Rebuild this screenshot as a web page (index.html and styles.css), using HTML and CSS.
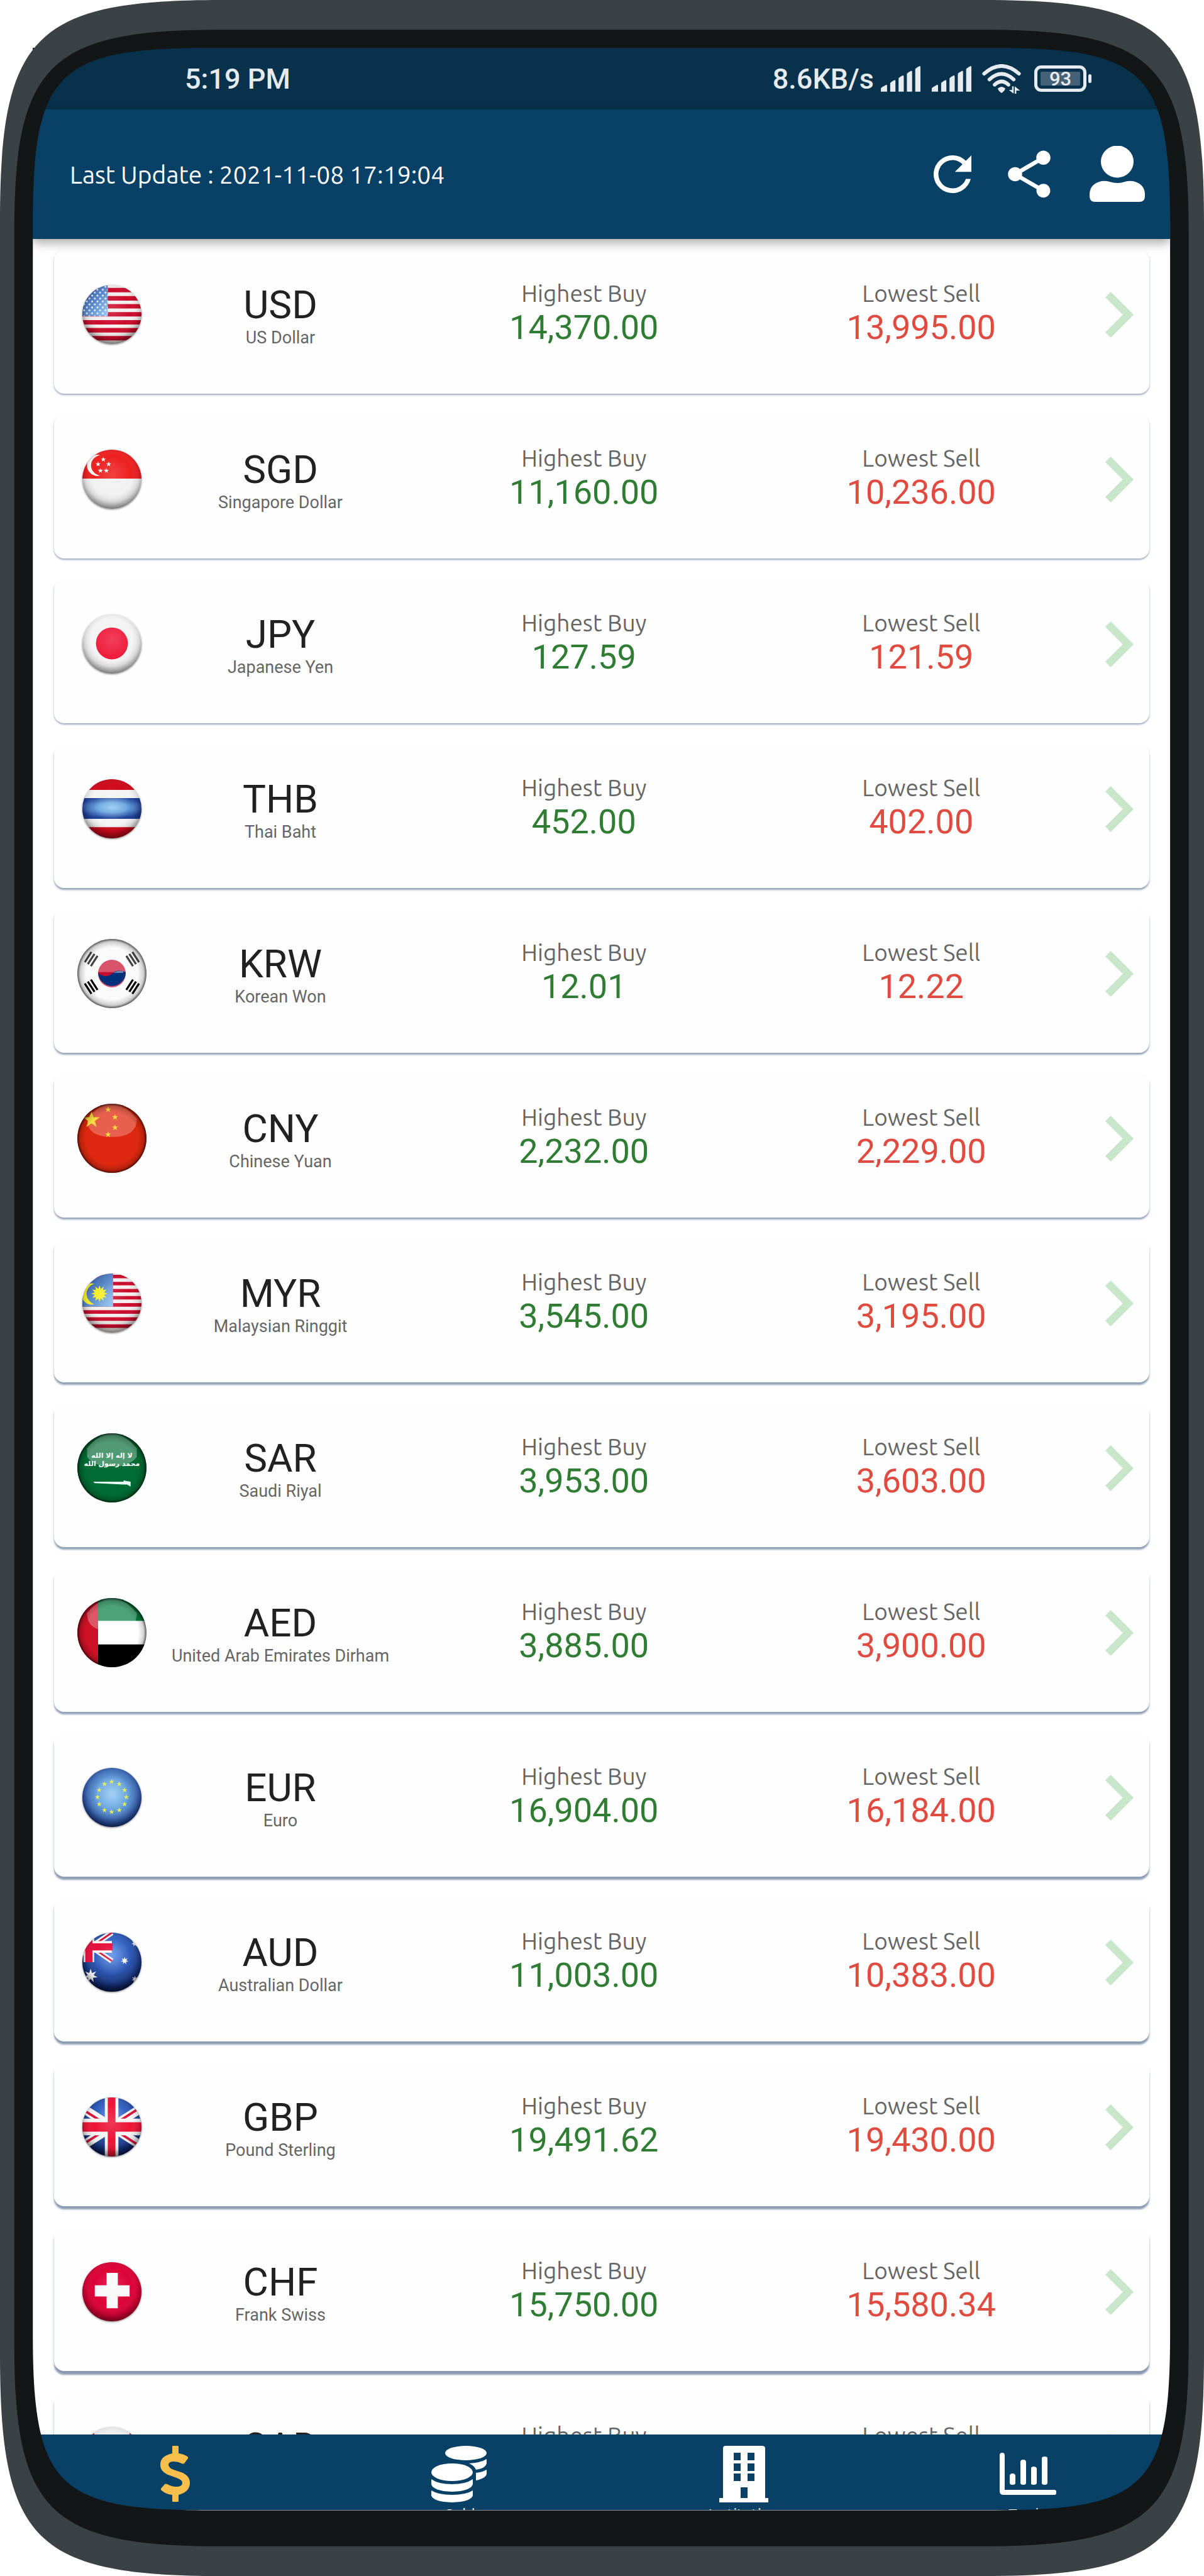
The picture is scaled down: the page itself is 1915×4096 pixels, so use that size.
FILE: index.html
```html
<!DOCTYPE html>
<html lang="en">
<head>
<meta charset="utf-8">
<meta name="viewport" content="width=device-width, initial-scale=1">
<title>Exchange rates</title>
<link rel="stylesheet" href="styles.css">
</head>
<body>
<svg class="defs" aria-hidden="true">
  <defs>
    <radialGradient id="shade" cx="50%" cy="42%" r="58%">
      <stop offset="0" stop-color="#fff" stop-opacity=".16"/>
      <stop offset=".55" stop-color="#fff" stop-opacity="0"/>
      <stop offset=".8" stop-color="#000" stop-opacity=".12"/>
      <stop offset="1" stop-color="#000" stop-opacity=".5"/>
    </radialGradient>
    <radialGradient id="rim" cx="50%" cy="50%" r="50%">
      <stop offset=".76" stop-color="#000" stop-opacity="0"/>
      <stop offset=".92" stop-color="#000" stop-opacity=".18"/>
      <stop offset="1" stop-color="#000" stop-opacity=".65"/>
    </radialGradient>
    <radialGradient id="skyglow" cx="50%" cy="45%" r="55%">
      <stop offset="0" stop-color="#92c8f2"/>
      <stop offset=".45" stop-color="#6ba6e0"/>
      <stop offset="1" stop-color="#1c3d94"/>
    </radialGradient>
    <radialGradient id="navyglow" cx="50%" cy="35%" r="62%">
      <stop offset="0" stop-color="#5b90ea"/>
      <stop offset=".5" stop-color="#2f5bb8"/>
      <stop offset="1" stop-color="#0b1f5e"/>
    </radialGradient>
    <linearGradient id="canton" x1="0" y1="0" x2="1" y2="1">
      <stop offset="0" stop-color="#1f459c"/>
      <stop offset="1" stop-color="#8fc6f0"/>
    </linearGradient>
    <pattern id="stars" width="9" height="10" patternUnits="userSpaceOnUse">
      <circle cx="3" cy="3" r="1.5" fill="#fff"/><circle cx="7.500" cy="8" r="1.500" fill="#fff"/>
    </pattern>
    <symbol id="star" viewBox="-10 -10 20 20">
      <path d="M0-10 2.400-3.200 9.500-3.100 3.900 1.200 5.900 8.100 0 4-5.900 8.100-3.900 1.200-9.500-3.100-2.400-3.200Z"/>
    </symbol>
    <symbol id="star7" viewBox="-10 -10 20 20">
      <path d="M0-10 1.900-3.900 7.800-6.200 4.200-1 9.700 2.200 3.400 2.700 4.300 9 0 4.300-4.300 9-3.400 2.700-9.700 2.200-4.200-1-7.800-6.200-1.900-3.900Z"/>
    </symbol>
    <symbol id="trigram" viewBox="0 0 24 18">
      <path d="M0 0h24v4H0zM0 7h24v4H0zM0 14h24v4H0z"/>
    </symbol>
    <symbol id="chevron" viewBox="8.590 6 7.410 12">
      <path d="M10 6 8.590 7.410 13.170 12l-4.580 4.590L10 18l6-6z"/>
    </symbol>
    <symbol id="signal" viewBox="0 0 76 49">
      <path d="M0 49V43Q0 41 10 36Q12 35 12 38V49ZM18 49V33Q18 31 26 27Q28 26 28 29V49ZM34 49V24Q34 22 42 18Q44 17 44 20V49ZM50 49V15Q50 13 58 9Q60 8 60 11V49ZM66 49V6Q66 4 74 0Q76-1 76 2V49Z"/>
    </symbol>
  </defs>
</svg>

<div class="phone">
  <div class="screen">
    <div class="statusbar">
      <span class="clock">5:19 PM</span>
      <div class="status-icons">
        <span class="speed">8.6KB/s</span>
        <svg class="signal" aria-hidden="true"><use href="#signal"/></svg>
        <svg class="signal" aria-hidden="true"><use href="#signal"/></svg>
        <svg class="wifi" viewBox="0 0 74 56" aria-hidden="true">
          <g fill="none" stroke="currentColor" stroke-width="7" stroke-linecap="round"><path d="M4 18Q37-11 70 18M14 29Q37 8 60 29M24 39Q37 27 50 39"/></g>
          <path fill="currentColor" d="M30 46Q37 40 44 46Q44 50 37 55Q30 50 30 46ZM57 42h3v14L51 49h6ZM65 57h-3V42l10 8h-7Z"/>
        </svg>
        <span class="battery"><span class="battery-level">93</span></span>
      </div>
    </div>

    <header class="appbar">
      <p class="updated">Last Update : 2021-11-08 17:19:04</p>
      <button class="icon-button" type="button" aria-label="Refresh">
        <svg viewBox="0 0 24 24"><path d="M17.650 6.350A7.958 7.958 0 0 0 12 4a8 8 0 1 0 7.730 10h-2.080A5.990 5.990 0 0 1 12 18a6 6 0 1 1 0-12c1.660 0 3.140.690 4.220 1.780L13 11h7V4z"/></svg>
      </button>
      <button class="icon-button" type="button" aria-label="Share">
        <svg viewBox="0 0 24 24"><path d="M18 16.080c-.76 0-1.440.3-1.960.77L8.910 12.700c.05-.23.09-.46.09-.7s-.04-.47-.09-.7l7.050-4.110c.54.5 1.250.81 2.040.81 1.660 0 3-1.340 3-3s-1.340-3-3-3-3 1.340-3 3c0 .24.04.47.09.7L8.040 9.810C7.500 9.310 6.790 9 6 9c-1.660 0-3 1.340-3 3s1.340 3 3 3c.79 0 1.500-.31 2.040-.81l7.120 4.160c-.05.21-.08.43-.08.65 0 1.610 1.310 2.920 2.920 2.920s2.920-1.310 2.920-2.920-1.310-2.920-2.920-2.920z"/></svg>
      </button>
      <button class="icon-button account" type="button" aria-label="Account">
        <svg viewBox="0 0 90 90"><ellipse cx="45" cy="25" rx="26" ry="25.500"/><path d="M1 80V76Q2 60 20 56Q27 55 33 57Q45 61 57 57Q63 55 70 56Q88 60 89 76V80Q89 89 80 89H10Q1 89 1 80Z"/></svg>
      </button>
    </header>

    <main class="list">
      <ul class="rates">
        <li><a class="card" href="#usd">
          <svg class="flag" viewBox="0 0 100 100" aria-hidden="true"><path fill="#f4eeee" d="M0 0h100v100H0z"/><path fill="#cb0b2c" d="M0 5h100v7.500H0zM0 19h100v7.500H0zM0 32.500h100v7.500H0zM0 46h100v7.500H0zM0 59.500h100v7.500H0zM0 73h100v7.500H0zM0 86.500h100v7.500H0z"/><path fill="url(#canton)" d="M0 0h43v53H0z"/><path fill="url(#stars)" d="M0 0h43v53H0z"/><path fill="url(#shade)" d="M0 0h100v100H0z"/></svg>
          <div class="currency"><h2 class="code">USD</h2><p class="name">US Dollar</p></div>
          <dl class="quote buy"><dt>Highest Buy</dt><dd>14,370.00</dd></dl>
          <dl class="quote sell"><dt>Lowest Sell</dt><dd>13,995.00</dd></dl>
          <svg class="chevron" aria-hidden="true"><use href="#chevron"/></svg>
        </a></li>
        <li><a class="card" href="#sgd">
          <svg class="flag" viewBox="0 0 100 100" aria-hidden="true"><path fill="#f2f2f2" d="M0 0h100v100H0z"/><path fill="#ee2020" d="M0 0h100v49H0z"/><path fill="#fff" d="M30 9A18 18 0 1 0 30 44A20 18 0 0 1 30 9Z"/><g fill="#fff"><use href="#star" x="31" y="12" width="9" height="9"/><use href="#star" x="22" y="20" width="9" height="9"/><use href="#star" x="40" y="20" width="9" height="9"/><use href="#star" x="26" y="31" width="9" height="9"/><use href="#star" x="36" y="31" width="9" height="9"/></g><path fill="url(#shade)" d="M0 0h100v100H0z"/></svg>
          <div class="currency"><h2 class="code">SGD</h2><p class="name">Singapore Dollar</p></div>
          <dl class="quote buy"><dt>Highest Buy</dt><dd>11,160.00</dd></dl>
          <dl class="quote sell"><dt>Lowest Sell</dt><dd>10,236.00</dd></dl>
          <svg class="chevron" aria-hidden="true"><use href="#chevron"/></svg>
        </a></li>
        <li><a class="card" href="#jpy">
          <svg class="flag" viewBox="0 0 100 100" aria-hidden="true"><path fill="#f4f4f4" d="M0 0h100v100H0z"/><circle cx="50" cy="49" r="27" fill="#ef1c3c"/><path fill="url(#shade)" d="M0 0h100v100H0z"/></svg>
          <div class="currency"><h2 class="code">JPY</h2><p class="name">Japanese Yen</p></div>
          <dl class="quote buy"><dt>Highest Buy</dt><dd>127.59</dd></dl>
          <dl class="quote sell"><dt>Lowest Sell</dt><dd>121.59</dd></dl>
          <svg class="chevron" aria-hidden="true"><use href="#chevron"/></svg>
        </a></li>
        <li><a class="card" href="#thb">
          <svg class="flag" viewBox="0 0 100 100" aria-hidden="true"><path fill="#f4f4f4" d="M0 0h100v100H0z"/><path fill="#cf0a1c" d="M0 0h100v18H0zM0 81h100v19H0z"/><path fill="url(#skyglow)" d="M0 32h100v35H0z"/><path fill="url(#shade)" d="M0 0h100v100H0z"/></svg>
          <div class="currency"><h2 class="code">THB</h2><p class="name">Thai Baht</p></div>
          <dl class="quote buy"><dt>Highest Buy</dt><dd>452.00</dd></dl>
          <dl class="quote sell"><dt>Lowest Sell</dt><dd>402.00</dd></dl>
          <svg class="chevron" aria-hidden="true"><use href="#chevron"/></svg>
        </a></li>
        <li><a class="card" href="#krw">
          <svg class="flag large" viewBox="0 0 100 100" aria-hidden="true"><path fill="#fafafa" d="M0 0h100v100H0z"/><circle cx="50" cy="50" r="20" fill="#d9546b"/><path fill="#00307a" d="M30 48A20 20 0 0 0 70 48Q58 43 50 50Q40 58 30 48Z"/><path fill="#c40b30" d="M30 46Q30 50 32 51Q42 57 50 50Q53 48 55 48H30Z"/><path fill="#6a86b0" d="M52 49Q60 44 67 47L66 49Z"/><g fill="#444"><use href="#trigram" x="-9" y="-7" width="18" height="14" transform="translate(20 29) rotate(-57)"/><use href="#trigram" x="-9" y="-7" width="18" height="14" transform="translate(80 29) rotate(57)"/></g><g><use href="#trigram" x="-9" y="-7" width="18" height="14" transform="translate(20 69) rotate(57)"/><use href="#trigram" x="-9" y="-7" width="18" height="14" transform="translate(80 69) rotate(-57)"/></g><path fill="url(#rim)" d="M0 0h100v100H0z"/></svg>
          <div class="currency"><h2 class="code">KRW</h2><p class="name">Korean Won</p></div>
          <dl class="quote buy"><dt>Highest Buy</dt><dd>12.01</dd></dl>
          <dl class="quote sell"><dt>Lowest Sell</dt><dd>12.22</dd></dl>
          <svg class="chevron" aria-hidden="true"><use href="#chevron"/></svg>
        </a></li>
        <li><a class="card" href="#cny">
          <svg class="flag large" viewBox="0 0 100 100" aria-hidden="true"><path fill="#de2910" d="M0 0h100v100H0z"/><path fill="#fff" fill-opacity=".26" d="M14 22Q50-22 86 22Q86 48 50 48Q14 48 14 22Z"/><g fill="#f5dc3c"><use href="#star" x="8" y="11" width="25" height="25"/><use href="#star" x="40" y="4" width="9" height="9"/><use href="#star" x="50" y="15" width="9" height="9"/><use href="#star" x="50" y="30" width="9" height="9"/><use href="#star" x="40" y="40" width="9" height="9"/></g><path fill="url(#rim)" d="M0 0h100v100H0z"/></svg>
          <div class="currency"><h2 class="code">CNY</h2><p class="name">Chinese Yuan</p></div>
          <dl class="quote buy"><dt>Highest Buy</dt><dd>2,232.00</dd></dl>
          <dl class="quote sell"><dt>Lowest Sell</dt><dd>2,229.00</dd></dl>
          <svg class="chevron" aria-hidden="true"><use href="#chevron"/></svg>
        </a></li>
        <li><a class="card" href="#myr">
          <svg class="flag" viewBox="0 0 100 100" aria-hidden="true"><path fill="#f4eeee" d="M0 0h100v100H0z"/><path fill="#cb0b2c" d="M0 2h100v6H0zM0 14h100v6H0zM0 26h100v6H0zM0 38h100v6H0zM0 50h100v6H0zM0 62h100v6H0zM0 74h100v6H0zM0 86h100v6H0z"/><path fill="url(#canton)" d="M0 0h52v56H0z"/><path fill="#f6f02a" d="M20 17A18 18 0 1 0 20 52A21 19 0 0 1 20 17ZM29 20l2 6 5-4-1 6 6-1-4 5 6 2-6 2 4 5-6-1 1 6-5-4-2 6-2-6-5 4 1-6-6 1 4-5-6-2 6-2-4-5 6 1-1-6 5 4z"/><path fill="url(#shade)" d="M0 0h100v100H0z"/></svg>
          <div class="currency"><h2 class="code">MYR</h2><p class="name">Malaysian Ringgit</p></div>
          <dl class="quote buy"><dt>Highest Buy</dt><dd>3,545.00</dd></dl>
          <dl class="quote sell"><dt>Lowest Sell</dt><dd>3,195.00</dd></dl>
          <svg class="chevron" aria-hidden="true"><use href="#chevron"/></svg>
        </a></li>
        <li><a class="card" href="#sar">
          <svg class="flag large" viewBox="0 0 100 100" aria-hidden="true"><path fill="#006b33" d="M0 0h100v100H0z"/><path fill="#fff" fill-opacity=".32" d="M14 22Q50-22 86 22V34Q76 48 50 48T14 34Z"/><g class="shahada"><text x="50" y="35">لا إله إلا الله</text><text x="50" y="47">محمد رسول الله</text></g><path fill="#e8fff4" d="M23 70H67V68L71 69 77 70V77L72 74H67L25 72Z"/><path fill="url(#rim)" d="M0 0h100v100H0z"/></svg>
          <div class="currency"><h2 class="code">SAR</h2><p class="name">Saudi Riyal</p></div>
          <dl class="quote buy"><dt>Highest Buy</dt><dd>3,953.00</dd></dl>
          <dl class="quote sell"><dt>Lowest Sell</dt><dd>3,603.00</dd></dl>
          <svg class="chevron" aria-hidden="true"><use href="#chevron"/></svg>
        </a></li>
        <li><a class="card" href="#aed">
          <svg class="flag large" viewBox="0 0 100 100" aria-hidden="true"><path fill="#fff" d="M0 0h100v100H0z"/><path fill="#007a3d" d="M30 0h70v33H30z"/><path d="M30 67h70v33H30z"/><path fill="#ce1126" d="M0 0h30v100H0z"/><path fill="#fff" fill-opacity=".3" d="M14 22Q50-22 86 22Q86 48 50 48Q14 48 14 22Z"/><path fill="url(#rim)" d="M0 0h100v100H0z"/></svg>
          <div class="currency"><h2 class="code">AED</h2><p class="name">United Arab Emirates Dirham</p></div>
          <dl class="quote buy"><dt>Highest Buy</dt><dd>3,885.00</dd></dl>
          <dl class="quote sell"><dt>Lowest Sell</dt><dd>3,900.00</dd></dl>
          <svg class="chevron" aria-hidden="true"><use href="#chevron"/></svg>
        </a></li>
        <li><a class="card" href="#eur">
          <svg class="flag" viewBox="0 0 100 100" aria-hidden="true"><path fill="url(#skyglow)" d="M0 0h100v100H0z"/><g fill="#e6ee4a"><use href="#star" x="45" y="19" width="9" height="9"/><use href="#star" x="58" y="23" width="9" height="9"/><use href="#star" x="67" y="33" width="9" height="9"/><use href="#star" x="70" y="45" width="9" height="9"/><use href="#star" x="67" y="57" width="9" height="9"/><use href="#star" x="58" y="67" width="9" height="9"/><use href="#star" x="45" y="70" width="9" height="9"/><use href="#star" x="33" y="67" width="9" height="9"/><use href="#star" x="24" y="57" width="9" height="9"/><use href="#star" x="21" y="45" width="9" height="9"/><use href="#star" x="24" y="33" width="9" height="9"/><use href="#star" x="33" y="23" width="9" height="9"/></g><path fill="url(#shade)" d="M0 0h100v100H0z"/></svg>
          <div class="currency"><h2 class="code">EUR</h2><p class="name">Euro</p></div>
          <dl class="quote buy"><dt>Highest Buy</dt><dd>16,904.00</dd></dl>
          <dl class="quote sell"><dt>Lowest Sell</dt><dd>16,184.00</dd></dl>
          <svg class="chevron" aria-hidden="true"><use href="#chevron"/></svg>
        </a></li>
        <li><a class="card" href="#aud">
          <svg class="flag" viewBox="0 0 100 100" aria-hidden="true"><path fill="url(#navyglow)" d="M0 0h100v100H0z"/><path stroke="#f4f4f4" stroke-width="9" d="M-20 0 50 48M-20 48 50 0"/><path stroke="#d8103a" stroke-width="3" d="M-20 0 50 48M-20 48 50 0"/><path fill="#f4f4f4" d="M0 14h50v20H0zM2 0h18v50H2z"/><path fill="#e50f3c" d="M0 18h51v12H0zM5 0h12v50H5z"/><g fill="#fff"><use href="#star7" x="2" y="60" width="24" height="26"/><use href="#star7" x="65" y="40" width="13" height="15"/><use href="#star7" x="83" y="12" width="12" height="12"/><use href="#star7" x="83" y="73" width="12" height="12"/></g><path fill="url(#shade)" d="M0 0h100v100H0z"/></svg>
          <div class="currency"><h2 class="code">AUD</h2><p class="name">Australian Dollar</p></div>
          <dl class="quote buy"><dt>Highest Buy</dt><dd>11,003.00</dd></dl>
          <dl class="quote sell"><dt>Lowest Sell</dt><dd>10,383.00</dd></dl>
          <svg class="chevron" aria-hidden="true"><use href="#chevron"/></svg>
        </a></li>
        <li><a class="card" href="#gbp">
          <svg class="flag" viewBox="0 0 100 100" aria-hidden="true"><path fill="url(#navyglow)" d="M0 0h100v100H0z"/><path stroke="#f4f4f4" stroke-width="15" d="M-6 14 106 86M-6 86 106 14"/><path stroke="#d8103a" stroke-width="4" d="M-6 16 50 52M50 52 106 88M-6 84 50 48M50 48 106 12"/><path fill="#f4f4f4" d="M0 36h100v28H0zM38 0h23v100H38z"/><path fill="#ec1436" d="M0 42h100v16H0zM43 0h13v100H43z"/><path fill="url(#shade)" d="M0 0h100v100H0z"/></svg>
          <div class="currency"><h2 class="code">GBP</h2><p class="name">Pound Sterling</p></div>
          <dl class="quote buy"><dt>Highest Buy</dt><dd>19,491.62</dd></dl>
          <dl class="quote sell"><dt>Lowest Sell</dt><dd>19,430.00</dd></dl>
          <svg class="chevron" aria-hidden="true"><use href="#chevron"/></svg>
        </a></li>
        <li><a class="card" href="#chf">
          <svg class="flag" viewBox="0 0 100 100" aria-hidden="true"><path fill="#dc0236" d="M0 0h100v100H0z"/><path fill="#f8f8f8" d="M41 18h19v21h20v19H60v20H41V58H21V39h20z"/><path fill="url(#shade)" d="M0 0h100v100H0z"/></svg>
          <div class="currency"><h2 class="code">CHF</h2><p class="name">Frank Swiss</p></div>
          <dl class="quote buy"><dt>Highest Buy</dt><dd>15,750.00</dd></dl>
          <dl class="quote sell"><dt>Lowest Sell</dt><dd>15,580.34</dd></dl>
          <svg class="chevron" aria-hidden="true"><use href="#chevron"/></svg>
        </a></li>
        <li><a class="card" href="#cad">
          <svg class="flag" viewBox="0 0 100 100" aria-hidden="true"><path fill="#eee" d="M0 0h100v100H0z"/><path fill="#c8101c" d="M0 0h20v100H0zM80 0h20v100H80zM50 22l6 12 8-3-3 16 10-7 2 6 8 2-16 20H52v12h-4V68H35L19 48l8-2 2-6 10 7-3-16 8 3z"/><path fill="url(#shade)" d="M0 0h100v100H0z"/></svg>
          <div class="currency"><h2 class="code">CAD</h2><p class="name">Canadian Dollar</p></div>
          <dl class="quote buy"><dt>Highest Buy</dt><dd>11,555.00</dd></dl>
          <dl class="quote sell"><dt>Lowest Sell</dt><dd>11,255.00</dd></dl>
          <svg class="chevron" aria-hidden="true"><use href="#chevron"/></svg>
        </a></li>
      </ul>
    </main>

    <nav class="tabs" aria-label="Sections">
      <a class="tab active" href="#currency" aria-label="Currency">
        <svg viewBox="0 0 90 90" aria-hidden="true"><path d="M41 1Q41 0 42 0H49Q51 0 51 1V12Q59 13 65 17Q67 18 66 20L60 28Q58 29 56 28Q50 25 44 25Q35 25 35 30Q35 35 43 38L55 42Q69 47 69 59Q69 73 51 78V88Q51 89 49 89H42Q41 89 41 88V78Q31 77 24 71Q22 70 23 68L29 61Q31 60 33 61Q40 65 47 65Q57 65 57 59Q57 54 48 51L37 47Q22 42 22 30Q22 16 41 12Z"/></svg>
      </a>
      <a class="tab" href="#gold">
        <svg viewBox="0 0 90 90" aria-hidden="true"><ellipse cx="56" cy="11.500" rx="33" ry="11.500"/><ellipse cx="34" cy="42" rx="33" ry="14"/><path d="M1 53Q12 61 34 61T67 53V61Q64 72 34 73Q4 72 1 61ZM1 71Q12 78 34 78T67 71V79Q64 89 34 90Q4 89 1 79ZM89 21V28Q87 36 72 38Q69 31 61 28Q80 27 89 21ZM89 38V45Q87 52 72 55V43Q82 42 89 38Z"/></svg>
        <span>Gold</span>
      </a>
      <a class="tab" href="#institution">
        <svg viewBox="0 0 90 90" aria-hidden="true"><path fill-rule="evenodd" d="M12 4Q12 0 16 0H74Q79 0 79 4V83H84V90H6V83H12ZM29 11V23H40V11ZM51 11V23H62V11ZM29 28V40H40V28ZM51 28V40H62V28ZM29 44V56H40V44ZM51 44V56H62V44ZM40 66V83H51V66Z"/></svg>
        <span>Institution</span>
      </a>
      <a class="tab" href="#trade">
        <svg viewBox="0 0 90 90" aria-hidden="true"><path d="M0 15Q0 11 4 11T8 15V70H87Q90 70 90 73V75Q90 78 87 78H6Q0 78 0 72ZM16 48Q16 44 20.500 44T25 48V59Q25 62 20.500 62T16 59ZM33 26Q33 22 37.500 22T42 26V59Q42 62 37.500 62T33 59ZM50 36Q50 33 54 33T59 36V59Q59 62 54 62T50 59ZM67 20Q67 17 71.500 17T76 20V59Q76 62 71.500 62T67 59Z"/></svg>
        <span>Trade</span>
      </a>
    </nav>
  </div>

  <svg class="frame" viewBox="0 0 2273 4861" preserveAspectRatio="none" aria-hidden="true">
    <path class="frame-rim" fill-rule="evenodd" d="M418 0H1855C2207 0 2273 66 2273 418V4443C2273 4795 2207 4861 1855 4861H418C66 4861 0 4795 0 4443V418C0 66 66 0 418 0ZM418 57C94 57 28 123 28 437V4424C28 4738 94 4804 418 4804H1855C2177 4804 2243 4738 2243 4424V437C2243 123 2177 57 1855 57Z"/>
    <path class="frame-bezel" fill-rule="evenodd" d="M418 56C93 56 27 122 27 437V4424C27 4739 93 4805 418 4805H1855C2178 4805 2244 4739 2244 4424V437C2244 122 2178 56 1855 56ZM392 90.500H1879C2162 90.500 2209 138 2209 421V4407C2209 4690 2162 4737 1879 4737H392C109 4737 62 4690 62 4407V421C62 138 109 90.500 392 90.500Z"/>
  </svg>
</div>
</body>
</html>
```

FILE: styles.css
```css
* {
  box-sizing: border-box;
}

body {
  margin: 0;
  background: #fff;
  font-family: Roboto, "Liberation Sans", sans-serif;
}

h2, p, dl, dd, ul {
  margin: 0;
  padding: 0;
  font-weight: 400;
}

a {
  color: inherit;
  text-decoration: none;
}

svg {
  display: block;
  fill: currentColor;
}

.defs {
  position: absolute;
  width: 0;
  height: 0;
}

/* Handset */

.phone {
  position: relative;
  height: 100vh;
  padding: 76px 54px 105px 52px;
}

.frame {
  position: absolute;
  z-index: 2;
  inset: 0;
  width: 100%;
  height: 100%;
  pointer-events: none;
}

.frame-rim {
  fill: #3b4245;
}

.frame-bezel {
  fill: #121616;
}

.screen {
  display: flex;
  flex-direction: column;
  height: 100%;
  overflow: hidden;
  background: #fff;
}

/* Status bar */

.statusbar {
  display: flex;
  flex: none;
  align-items: center;
  justify-content: space-between;
  height: 98px;
  padding: 0 125px 0 242px;
  background: #08314c;
  color: #e6ebf0;
  font-size: 45px;
  font-weight: 500;
}

.status-icons {
  display: flex;
  align-items: center;
}

.signal {
  width: 63px;
  height: 41px;
  margin-left: 11px;
}

.signal + .signal {
  margin-left: 18px;
}

.wifi {
  width: 62px;
  height: 47px;
  margin-left: 17px;
}

.battery {
  position: relative;
  width: 83px;
  height: 42px;
  margin: 0 8px 0 21px;
  padding: 5px;
  border: 5px solid currentColor;
  border-radius: 11px;
}

.battery::after {
  content: "";
  position: absolute;
  top: 9px;
  right: -13px;
  width: 5px;
  height: 14px;
  border-radius: 3px;
  background: currentColor;
}

.battery-level {
  display: block;
  height: 22px;
  border-radius: 2px;
  background: #456277;
  font-size: 31px;
  line-height: 24px;
  text-align: center;
}

/* App bar */

.appbar {
  position: relative;
  z-index: 1;
  display: flex;
  flex: none;
  align-items: center;
  height: 206px;
  padding: 0 39px 0 59px;
  background: #094166;
  box-shadow: 0 6px 16px rgba(0, 0, 0, 0.35);
  color: #fff;
}

.updated {
  flex: 1;
  font-family: Ubuntu, "Noto Sans", sans-serif;
  font-size: 39px;
}

.icon-button {
  width: 90px;
  height: 90px;
  margin-left: 32px;
  padding: 0;
  border: 0;
  background: none;
  color: inherit;
}

.icon-button.account {
  margin-left: 50px;
}

/* Rate list */

.list {
  flex: 1;
  min-height: 0;
  overflow: hidden;
}

.rates {
  display: flex;
  flex-direction: column;
  gap: 33px;
  padding: 17px 33px 0 34px;
  list-style: none;
}

.card {
  display: grid;
  grid-template-columns: 184px 352px minmax(0, 1fr) minmax(0, 1fr) 95px;
  align-items: center;
  height: 229px;
  padding-bottom: 23px;
  border-radius: 16px;
  background: #fefefe;
  box-shadow: 0 2px 3px #97a6bd;
}

.rates li:nth-child(n+4) .card {
  box-shadow: 0 3px 3px #94a2b8;
}

.rates li:nth-child(n+7) .card {
  box-shadow: 0 4px 3px #90a0b6;
}

.rates li:nth-child(n+10) .card {
  box-shadow: 0 5px 3px #8c9cb3;
}

.rates li:nth-child(n+13) .card {
  box-shadow: 0 6px 3px #8998b0;
}

.flag {
  justify-self: center;
  width: 94px;
  height: 94px;
  border-radius: 50%;
  box-shadow: 0 1px 3px rgba(0, 0, 0, 0.5);
}

.flag.large {
  width: 110px;
  height: 110px;
  box-shadow: none;
}

.shahada {
  fill: #fff;
  font-family: "DejaVu Sans", sans-serif;
  font-size: 10px;
  font-weight: 700;
  text-anchor: middle;
}

.currency,
.quote {
  text-align: center;
}

.code {
  color: #212121;
  font-size: 62px;
  line-height: 73px;
}

.name {
  color: #666;
  font-size: 27px;
  line-height: 32px;
  white-space: nowrap;
}

.quote.buy {
  margin-left: 58px;
}

.quote.sell {
  margin-left: 20px;
}

.quote dt {
  color: #666;
  font-family: Ubuntu, "Noto Sans", sans-serif;
  font-size: 37px;
  line-height: 42px;
}

.quote dd {
  font-size: 54px;
  line-height: 66px;
}

.buy dd {
  color: #2e7d32;
}

.sell dd {
  color: #e04a3f;
}

.chevron {
  justify-self: center;
  width: 45px;
  height: 73px;
  color: #c8e6c9;
}

/* Bottom tabs */

.tabs {
  display: grid;
  flex: none;
  grid-template-columns: repeat(4, 1fr);
  height: 120px;
  overflow: hidden;
  background: #094166;
  color: #fff;
}

.tab {
  display: flex;
  flex-direction: column;
  align-items: center;
  gap: 6px;
  padding-top: 18px;
  font-family: Ubuntu, "Noto Sans", sans-serif;
  font-size: 24px;
  line-height: 28px;
}

.tab svg {
  flex: none;
  width: 90px;
  height: 90px;
}

.tab.active {
  color: #f9bf4c;
}
```
